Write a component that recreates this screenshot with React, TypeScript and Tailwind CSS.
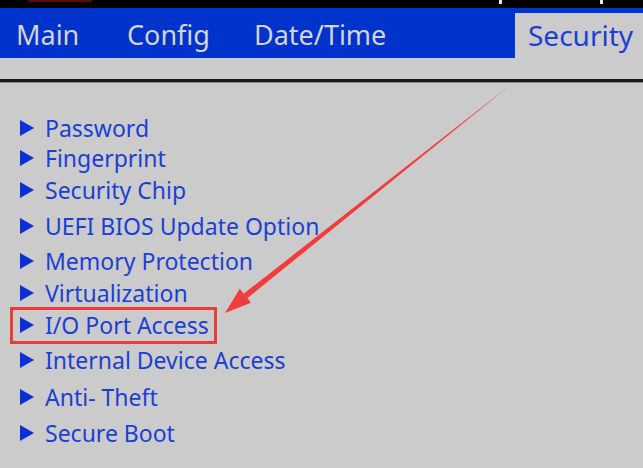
import React from 'react';

const items = [
  { label: 'Password', mt: 'mt-0' },
  { label: 'Fingerprint', mt: 'mt-0' },
  { label: 'Security Chip', mt: 'mt-[2px]' },
  { label: 'UEFI BIOS Update Option', mt: 'mt-[6px]' },
  { label: 'Memory Protection', mt: 'mt-[5px]' },
  { label: 'Virtualization', mt: 'mt-[2px]' },
  { label: 'I/O Port Access', mt: 'mt-[2px]', boxed: true },
  { label: 'Internal Device Access', mt: 'mt-[5px]' },
  { label: 'Anti- Theft', mt: 'mt-[7px]' },
  { label: 'Secure Boot', mt: 'mt-[6px]' },
];

const tabs = [
  { label: 'Main', w: 'w-[111px]' },
  { label: 'Config', w: 'w-[127px]' },
  { label: 'Date/Time', w: 'w-[277px]' },
];

export default function App() {
  return (
    <div
      className="relative w-[643px] h-[468px] overflow-hidden bg-[#cbcbcb]"
      style={{ fontFamily: '"Noto Sans", "Open Sans", sans-serif' }}
    >
      {/* top strip */}
      <div className="relative h-[8px] bg-black">
        <div className="absolute left-[28px] top-0 w-[64px] h-[2px] bg-[#5a0a0a]" />
        <div className="absolute left-[499px] top-0 w-[3px] h-[4px] bg-[#e8e8e8]" />
        <div className="absolute left-[600px] top-0 w-[3px] h-[4px] bg-[#e8e8e8]" />
      </div>

      {/* tab bar */}
      <div className="flex h-[50px] bg-[#0033cc]">
        {tabs.map((t) => (
          <div
            key={t.label}
            className={`${t.w} pl-[16px] pt-[10px] text-[27px] leading-[34px] text-[#d4d4d4]`}
          >
            {t.label}
          </div>
        ))}
        <div className="mt-[5px] flex-1 bg-[#cbcbcb] pl-[13px] pt-[5px] text-[28px] leading-[34px] text-[#1b3fd4]">
          Security
        </div>
      </div>

      <div className="h-[21px]" />
      <div className="h-[3px] bg-[#1a1a1a]" />
      <div className="h-[1px] bg-[#8a8a8a]" />

      {/* menu */}
      <div className="pl-[13px] pt-[30px]">
        {items.map((it) => (
          <div key={it.label} className={`${it.mt} h-[30px] flex items-center`}>
            <div
              className={`flex shrink-0 items-center h-[37px] pl-[7px] pr-[5px] -ml-[3px] border-[3px] ${
                it.boxed ? 'border-[#f03a3a]' : 'border-transparent'
              }`}
            >
              <span className="mr-[11px] inline-block w-0 h-0 border-y-[8px] border-y-transparent border-l-[14px] border-l-[#0a2fd6]" />
              <span className="text-[23px] leading-[28px] text-[#1b3fd4]">{it.label}</span>
            </div>
          </div>
        ))}
      </div>

      {/* annotation arrow */}
      <svg className="absolute left-0 top-0" width="643" height="468" viewBox="0 0 643 468">
        <polygon points="514,82 247.2,298.3 243.6,293.8" fill="#f23b3b" />
        <polygon points="225,313 251,302.8 239.8,288.8" fill="#f23b3b" />
      </svg>
    </div>
  );
}
